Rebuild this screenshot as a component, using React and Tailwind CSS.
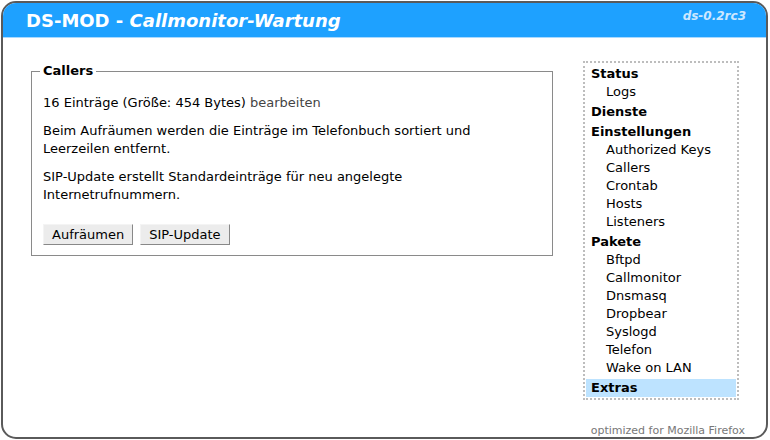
import React from 'react';

const menu = [
    { title: 'Status', items: ['Logs'] },
    { title: 'Dienste', items: [] },
    { title: 'Einstellungen', items: ['Authorized Keys', 'Callers', 'Crontab', 'Hosts', 'Listeners'] },
    { title: 'Pakete', items: ['Bftpd', 'Callmonitor', 'Dnsmasq', 'Dropbear', 'Syslogd', 'Telefon', 'Wake on LAN'] },
    { title: 'Extras', items: [], active: true },
];

const Button = ({ children }) => (
    <button className="h-[21px] px-[8px] bg-[#ececec] border border-t-[#f4f4f4] border-l-[#f4f4f4] border-r-[#888] border-b-[#888] text-[13px] leading-[18px] text-black">
        {children}
    </button>
);

const App = () => {
    return (
        <div className="w-[770px] h-[440px] bg-white pt-[1px] pl-[1px]" style={{ fontFamily: '"DejaVu Sans", Verdana, sans-serif' }}>
            <div className="w-[767px] h-[438px] border-2 border-[#5a5a5a] rounded-[15px] overflow-hidden flex flex-col">
                {/* header */}
                <div className="h-[35px] shrink-0 bg-[#1ea1ff] border-b border-[#a9d9ff] flex items-start justify-between pl-[23px] pr-[20px]">
                    <h1 className="text-[18px] leading-[22px] font-bold text-white mt-[7px]">
                        DS-MOD - <i>Callmonitor-Wartung</i>
                    </h1>
                    <span className="text-[12px] leading-[14px] font-bold italic text-[#cde8ff] mt-[6px]">ds-0.2rc3</span>
                </div>

                {/* main */}
                <div className="flex flex-1">
                    <div className="pl-[28px] pt-[24px]">
                        <fieldset className="w-[522px] border border-[#8a8a8a] px-[11px] pb-[10px]">
                            <legend className="-ml-[3px] px-[3px] text-[13px] leading-[18px] font-bold text-black">Callers</legend>
                            <p className="mt-[14px] text-[13px] leading-[18px] text-black">
                                16 Einträge (Größe: 454 Bytes) <a className="text-[#444]">bearbeiten</a>
                            </p>
                            <p className="mt-[10px] text-[13px] leading-[18px] text-black">
                                Beim Aufräumen werden die Einträge im Telefonbuch sortiert und Leerzeilen entfernt.
                            </p>
                            <p className="mt-[10px] text-[13px] leading-[18px] text-black">
                                SIP-Update erstellt Standardeinträge für neu angelegte Internetrufnummern.
                            </p>
                            <div className="mt-[20px] flex gap-[7px]">
                                <Button>Aufräumen</Button>
                                <Button>SIP-Update</Button>
                            </div>
                        </fieldset>
                    </div>

                    <div className="ml-auto mr-[27px] flex flex-col items-end">
                        <div className="mt-[23px] w-[156px] h-[339px] border-2 border-dotted border-[#bdbdbd] px-[1px] pt-[2px]">
                            {menu.map((group) => (
                                <div key={group.title}>
                                    <div className={`pl-[5px] text-[13px] leading-[18px] font-bold text-black ${group.title === 'Status' ? '' : 'mt-[2px]'} ${group.active ? 'bg-[#bde3ff]' : ''}`}>
                                        {group.title}
                                    </div>
                                    {group.items.map((item) => (
                                        <div key={item} className="pl-[20px] text-[13px] leading-[18px] text-black">{item}</div>
                                    ))}
                                </div>
                            ))}
                        </div>
                        <div className="mt-auto -mb-[1px] -mr-[6px] text-[11px] leading-[14px] text-[#777]">optimized for Mozilla Firefox</div>
                    </div>
                </div>
            </div>
        </div>
    );
};

export default App;
